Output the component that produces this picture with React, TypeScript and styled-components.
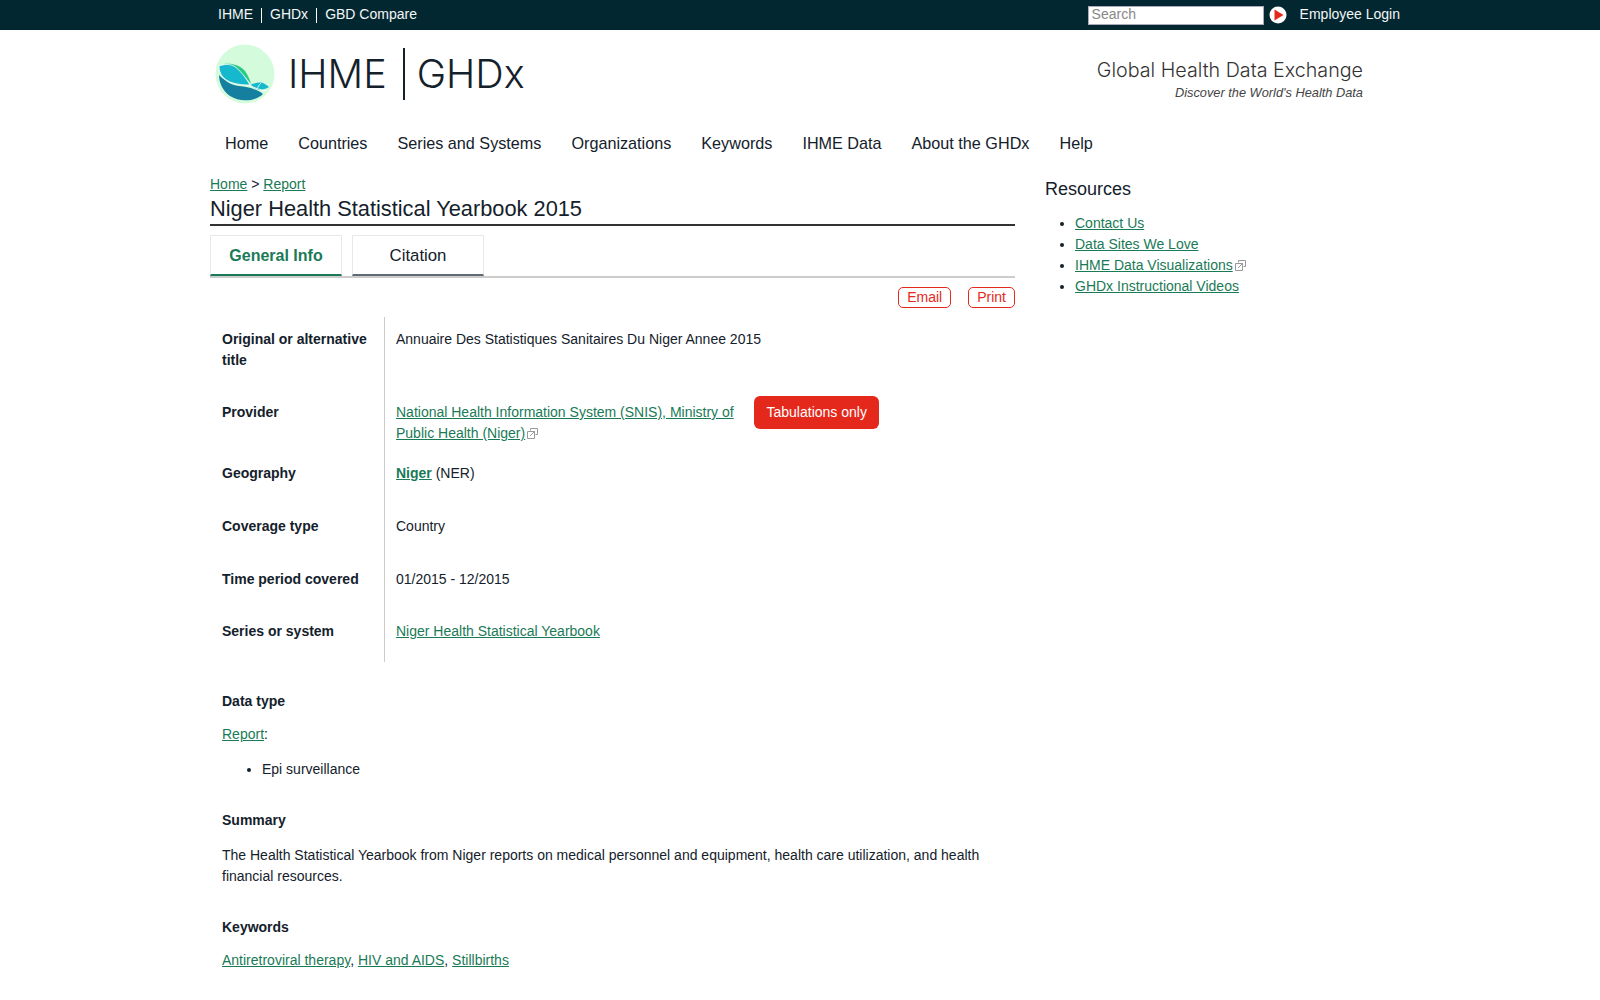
import styled, { createGlobalStyle } from "styled-components";

const GlobalStyle = createGlobalStyle`
  html, body { margin: 0; padding: 0; background: #fff; }
  body {
    font-family: "Liberation Sans", Arial, sans-serif;
    font-size: 14px;
    line-height: 21px;
    color: #14212b;
    overflow-x: hidden;
  }
`;

const green = "#1a7a56";
const red = "#e5281c";

const TopBar = styled.div`
  height: 30px;
  background: #022731;
  color: #fff;
`;
const TopInner = styled.div`
  width: 1180px;
  margin: 0 auto;
  height: 100%;
  display: flex;
  align-items: center;
  justify-content: space-between;
`;
const TopLinks = styled.div`
  display: flex;
  align-items: center;
  padding-left: 8px;
`;
const TopLink = styled.a<{ $last?: boolean }>`
  font-size: 14px;
  line-height: 13px;
  padding-bottom: 2px;
  color: #f4f6f6;
  padding-right: 8px;
  margin-right: 8px;
  border-right: ${(p) => (p.$last ? "none" : "1px solid #fff")};
`;
const TopRight = styled.div`
  display: flex;
  align-items: center;
  margin-right: -10px;
`;
const SearchInput = styled.input`
  box-sizing: border-box;
  width: 176px;
  height: 19px;
  border: 1px solid #aab;
  background: #fff;
  padding: 0 3px 2px;
  font-family: inherit;
  font-size: 14px;
  &::placeholder { color: #888; }
`;
const Login = styled.a`
  font-size: 14px;
  line-height: 18px;
  padding-bottom: 2px;
  color: #f4f6f6;
  margin-left: 13px;
`;
const GoIcon = styled.svg`
  width: 18px;
  height: 18px;
  margin-left: 5px;
`;

const Page = styled.div`
  width: 1180px;
  margin: 0 auto;
`;
const Header = styled.div`
  height: 89px;
  display: flex;
  justify-content: space-between;
  align-items: flex-start;
`;
const Brand = styled.div`
  display: flex;
  align-items: center;
  height: 60px;
  margin-top: 14px;
  padding-left: 5px;
`;
const LogoMark = styled.svg`
  width: 60px;
  height: 60px;
  margin-right: 13px;
  flex-shrink: 0;
`;
const BrandWord = styled.span`
  font-family: Inter, "Liberation Sans", sans-serif;
  font-weight: 300;
  font-size: 39.5px;
  line-height: 52px;
  color: #14212b;
`;
const BrandDivider = styled.span`
  width: 2px;
  height: 52px;
  background: #14212b;
  margin: 0 12px 0 16px;
`;
const Strap = styled.div`
  margin-top: 28px;
  margin-right: 27px;
  text-align: right;
`;
const StrapTitle = styled.div`
  font-family: Inter, "Open Sans", sans-serif;
  font-weight: 300;
  font-size: 19.7px;
  line-height: 24px;
  color: #333;
`;
const StrapSub = styled.div`
  font-size: 12.8px;
  line-height: 21px;
  font-style: italic;
  color: #444;
`;

const Nav = styled.nav`
  display: flex;
  gap: 30px;
  padding: 4px 15px 0;
  height: 40px;
  align-items: center;
`;
const NavItem = styled.a`
  font-size: 16.2px;
  color: #14212b;
`;

const Columns = styled.div`
  display: flex;
  margin-top: 11px;
`;
const Main = styled.main`
  width: 805px;
`;
const Side = styled.aside`
  margin-left: 30px;
  padding-top: 2px;
  width: 345px;
`;
const Crumbs = styled.div`
  line-height: 20px;
  height: 21px;
`;
const A = styled.a<{ $bold?: boolean }>`
  color: ${green};
  text-decoration: underline;
  font-weight: ${(p) => (p.$bold ? 700 : 400)};
`;
const Title = styled.h1`
  margin: 0;
  font-size: 21.8px;
  font-weight: 400;
  line-height: 28px;
  padding-bottom: 1px;
  border-bottom: 2px solid #333;
`;
const Tabs = styled.div`
  display: flex;
  gap: 10px;
  margin-top: 9px;
  height: 41px;
  border-bottom: 2px solid #ccc;
`;
const Tab = styled.a<{ $active?: boolean }>`
  box-sizing: border-box;
  width: 132px;
  height: 41px;
  display: flex;
  align-items: center;
  justify-content: center;
  font-size: ${(p) => (p.$active ? "16px" : "16.8px")};
  font-weight: ${(p) => (p.$active ? 700 : 400)};
  color: ${(p) => (p.$active ? green : "#14212b")};
  border: 1px solid #e8e8ea;
  border-bottom: 2px solid ${(p) => (p.$active ? green : "#5f6b73")};
  margin-bottom: ${(p) => (p.$active ? "-2px" : "-1px")};
`;
const Actions = styled.div`
  display: flex;
  justify-content: flex-end;
  gap: 17px;
  margin-top: 9px;
`;
const ActionBtn = styled.a`
  box-sizing: border-box;
  height: 21px;
  padding: 0 8px;
  display: flex;
  align-items: center;
  border: 1px solid ${red};
  border-radius: 5px;
  color: ${red};
  font-size: 14px;
`;
const Table = styled.div`
  margin-top: 9px;
  display: grid;
  grid-template-columns: 175px 1fr;
`;
const Label = styled.div<{ $pt: number; $pb: number }>`
  box-sizing: border-box;
  padding: ${(p) => p.$pt}px 12px ${(p) => p.$pb}px 12px;
  font-weight: 700;
  border-right: 1px solid #ccc;
`;
const Value = styled.div<{ $pt: number; $pb: number }>`
  padding: ${(p) => p.$pt}px 0 ${(p) => p.$pb}px 11px;
`;
const ProviderRow = styled.div`
  display: flex;
  align-items: flex-start;
  gap: 18px;
`;
const ProviderName = styled.div`
  width: 340px;
`;
const Badge = styled.span`
  margin-top: -6px;
  height: 33px;
  padding: 0 12.5px;
  display: flex;
  align-items: center;
  border-radius: 6px;
  background: ${red};
  color: #fff;
`;
const ExtIcon = styled.svg`
  width: 11px;
  height: 11px;
  margin-left: 2px;
  vertical-align: -1px;
`;
const Section = styled.section`
  padding: 0 12px;
`;
const SectionTitle = styled.div<{ $mt: number }>`
  margin-top: ${(p) => p.$mt}px;
  font-weight: 700;
`;
const Para = styled.p<{ $mt: number }>`
  margin: ${(p) => p.$mt}px 0 0;
`;
const Bullets = styled.ul<{ $mt?: number; $pl?: number }>`
  margin: ${(p) => p.$mt ?? 0}px 0 0;
  padding-left: ${(p) => p.$pl ?? 40}px;
`;
const SideTitle = styled.h3`
  margin: 0;
  font-size: 18px;
  font-weight: 400;
  line-height: 26px;
  height: 26px;
`;

function External() {
  return (
    <ExtIcon viewBox="0 0 11 11" fill="none" stroke="#999" strokeWidth="1">
      <path d="M3.5 2.5V0.5h7v6H8.5" />
      <path d="M0.5 3.5h7v7h-7z" />
      <path d="M3 8l4.5-4.5M5 3.5h2.5V6" />
    </ExtIcon>
  );
}

function Logo() {
  return (
    <LogoMark viewBox="0 0 60 60">
      <circle cx="30" cy="30" r="29.5" fill="#d4fcdc" />
      <path d="M4 31c6 6 12 10 20 11 8 1 16 2 24 8-8 8-24 8-33 2C8 47 4 39 4 31z" fill="#147f9e" />
      <path d="M9 20c8-1 16 1 21 7 3 4 5 9 6 13-5-7-15-16-27-20z" fill="#2bc986" />
      <path d="M4 22c5-2 11-2 15 0 6 4 12 12 16 19-12 0-20-2-25-6-4-3-6-8-6-13z" fill="#16b8cd" stroke="#fff" strokeWidth="0.8" />
      <path d="M35 41c4-2 9-3 13-2 2 1 4 2 6 4-3 2-7 3-10 3-3-1-6-3-9-5z" fill="#16b8cd" />
      <path d="M35 41c4 3 10 5 17 6M42 45c1-2 2-4 4-6" fill="none" stroke="#fff" strokeWidth="0.8" />
    </LogoMark>
  );
}

export default function App() {
  return (
    <>
      <GlobalStyle />
      <TopBar>
        <TopInner>
          <TopLinks>
            <TopLink>IHME</TopLink>
            <TopLink>GHDx</TopLink>
            <TopLink $last>GBD Compare</TopLink>
          </TopLinks>
          <TopRight>
            <SearchInput placeholder="Search" readOnly />
            <GoIcon viewBox="0 0 18 18">
              <circle cx="9" cy="9" r="8.5" fill="#fff" />
              <path d="M5.5 3.5L14.5 9L5.5 14.5z" fill={red} />
            </GoIcon>
            <Login>Employee Login</Login>
          </TopRight>
        </TopInner>
      </TopBar>
      <Page>
        <Header>
          <Brand>
            <Logo />
            <BrandWord>IHME</BrandWord>
            <BrandDivider />
            <BrandWord>GHDx</BrandWord>
          </Brand>
          <Strap>
            <StrapTitle>Global Health Data Exchange</StrapTitle>
            <StrapSub>Discover the World's Health Data</StrapSub>
          </Strap>
        </Header>
        <Nav>
          <NavItem>Home</NavItem>
          <NavItem>Countries</NavItem>
          <NavItem>Series and Systems</NavItem>
          <NavItem>Organizations</NavItem>
          <NavItem>Keywords</NavItem>
          <NavItem>IHME Data</NavItem>
          <NavItem>About the GHDx</NavItem>
          <NavItem>Help</NavItem>
        </Nav>
        <Columns>
          <Main>
            <Crumbs>
              <A>Home</A> &gt; <A>Report</A>
            </Crumbs>
            <Title>Niger Health Statistical Yearbook 2015</Title>
            <Tabs>
              <Tab $active>General Info</Tab>
              <Tab>Citation</Tab>
            </Tabs>
            <Actions>
              <ActionBtn>Email</ActionBtn>
              <ActionBtn>Print</ActionBtn>
            </Actions>
            <Table>
              <Label $pt={12} $pb={31}>Original or alternative title</Label>
              <Value $pt={12} $pb={31}>Annuaire Des Statistiques Sanitaires Du Niger Annee 2015</Value>
              <Label $pt={0} $pb={19}>Provider</Label>
              <Value $pt={0} $pb={19}>
                <ProviderRow>
                  <ProviderName>
                    <A>National Health Information System (SNIS), Ministry of Public Health (Niger)</A>
                    <External />
                  </ProviderName>
                  <Badge>Tabulations only</Badge>
                </ProviderRow>
              </Value>
              <Label $pt={0} $pb={32}>Geography</Label>
              <Value $pt={0} $pb={32}>
                <A $bold>Niger</A> (NER)
              </Value>
              <Label $pt={0} $pb={32}>Coverage type</Label>
              <Value $pt={0} $pb={32}>Country</Value>
              <Label $pt={0} $pb={31}>Time period covered</Label>
              <Value $pt={0} $pb={31}>01/2015 - 12/2015</Value>
              <Label $pt={0} $pb={20}>Series or system</Label>
              <Value $pt={0} $pb={20}>
                <A>Niger Health Statistical Yearbook</A>
              </Value>
            </Table>
            <Section>
              <SectionTitle $mt={29}>Data type</SectionTitle>
              <Para $mt={12}>
                <A>Report</A>:
              </Para>
              <Bullets $mt={14}>
                <li>Epi surveillance</li>
              </Bullets>
              <SectionTitle $mt={30}>Summary</SectionTitle>
              <Para $mt={14}>
                The Health Statistical Yearbook from Niger reports on medical personnel and equipment, health care
                utilization, and health financial resources.
              </Para>
              <SectionTitle $mt={30}>Keywords</SectionTitle>
              <Para $mt={12}>
                <A>Antiretroviral therapy</A>, <A>HIV and AIDS</A>, <A>Stillbirths</A>
              </Para>
            </Section>
          </Main>
          <Side>
            <SideTitle>Resources</SideTitle>
            <Bullets $mt={11} $pl={30}>
              <li><A>Contact Us</A></li>
              <li><A>Data Sites We Love</A></li>
              <li><A>IHME Data Visualizations</A><External /></li>
              <li><A>GHDx Instructional Videos</A></li>
            </Bullets>
          </Side>
        </Columns>
      </Page>
    </>
  );
}
